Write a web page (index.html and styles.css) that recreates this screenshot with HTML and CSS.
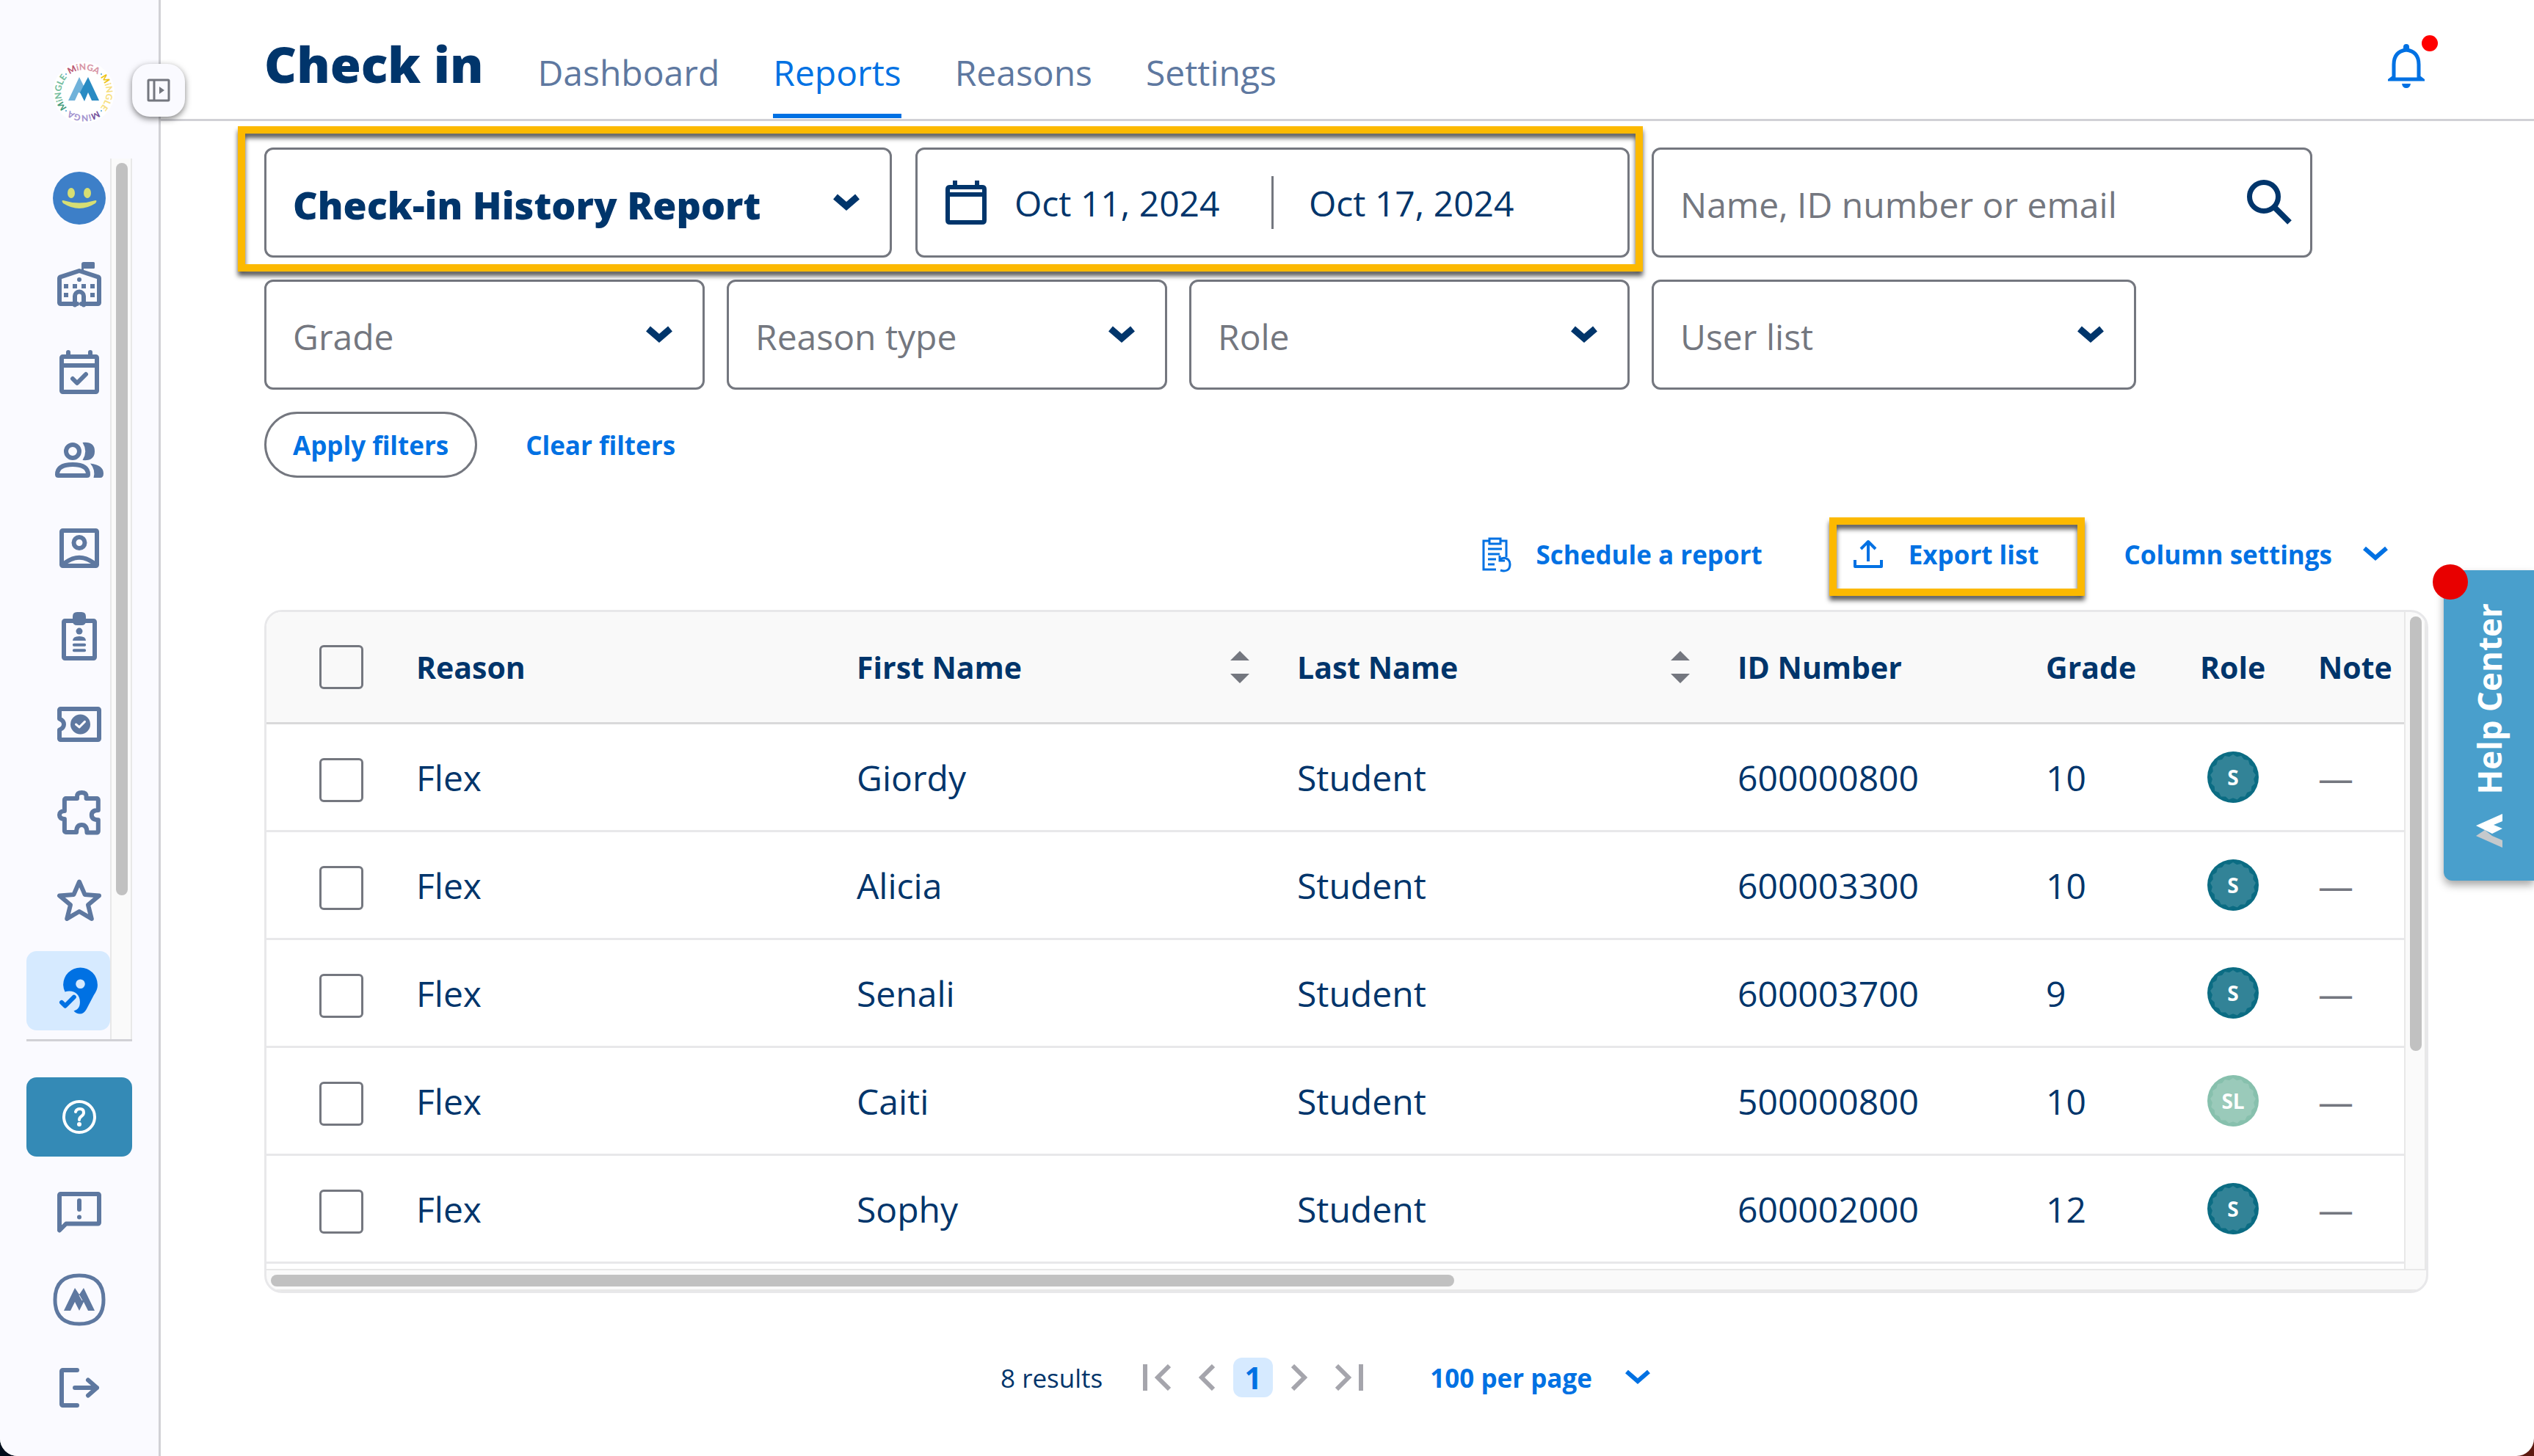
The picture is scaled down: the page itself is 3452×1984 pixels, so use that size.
FILE: index.html
```html
<!DOCTYPE html>
<html lang="en">
<head>
    <meta charset="UTF-8">
    <meta name="viewport" content="width=device-width, initial-scale=1.0">
    <title>Check in - Reports</title>
    <link rel="stylesheet" href="styles.css">
</head>
<body>
    <!-- Shared icons -->
    <svg class="sprite" aria-hidden="true">
        <symbol id="chevron" viewBox="0 0 40 26"><path d="M5 5l15 13L35 5"/></symbol>
        <symbol id="sort" viewBox="0 0 26 44"><path d="M13 0l13 13H0zM13 44l13-13H0z"/></symbol>
        <symbol id="badge" viewBox="0 0 70 70">
            <circle cx="35" cy="35" r="35"/>
            <path class="seal" d="M35 4L62.8 21.2 59.7 53.7 29.3 65.5 5.2 43.5 14.1 12.1 46.2 6.1 65.9 32.1 51.3 61.4 18.7 61.4 4.1 32.1 23.8 6.1 55.9 12.1 64.8 43.5 40.7 65.5 10.3 53.7 7.2 21.2z"/>
        </symbol>
    </svg>

    <div class="app">
        <aside class="sidebar">
            <a class="logo" href="#" aria-label="Minga">
                <svg viewBox="0 0 84 84">
                    <circle cx="42" cy="42" r="42" fill="#fff"/>
                    <path id="arcTop" d="M17 24A31 31 0 0 1 67 24" fill="none"/>
                    <path id="arcRight" d="M60 17A31 31 0 0 1 60 67" fill="none"/>
                    <path id="arcBottom" d="M67 60A31 31 0 0 1 17 60" fill="none"/>
                    <path id="arcLeft" d="M24 67A31 31 0 0 1 24 17" fill="none"/>
                    <text class="ring-text" fill="#d795a6"><textPath href="#arcTop" startOffset="50%"><tspan fill="#b95873">M</tspan>iNGA</textPath></text>
                    <text class="ring-text" fill="#f7df84"><textPath href="#arcRight" startOffset="50%"><tspan fill="#edc313">M</tspan>iNGLE</textPath></text>
                    <text class="ring-text" fill="#a595d0"><textPath href="#arcBottom" startOffset="50%"><tspan fill="#76539b">M</tspan>iNGA</textPath></text>
                    <text class="ring-text" fill="#77bea0"><textPath href="#arcLeft" startOffset="50%"><tspan fill="#459b79">M</tspan>iNGLE</textPath></text>
                    <path fill="#70b2da" d="M21 53L36 21l7 14-5 8-3-1-5 11z"/>
                    <path fill="#298bc3" d="M48 21l15 32H53l-5-11-5 12-6-12z"/>
                    <g fill="#4ba0cf"><circle cx="18" cy="17" r="1"/><circle cx="66" cy="17" r="1"/><circle cx="18" cy="67" r="1"/><circle cx="66" cy="67" r="1"/></g>
                </svg>
            </a>
            <button class="toggle" aria-label="Expand menu">
                <svg viewBox="0 0 32 32"><path d="M3 2h26a1 1 0 0 1 1 1v26a1 1 0 0 1-1 1H3a1 1 0 0 1-1-1V3a1 1 0 0 1 1-1zM10 2v28" fill="none" stroke="#74777f" stroke-width="3"/><path d="M17 11l7 5-7 5z" fill="#74777f"/></svg>
            </button>

            <nav class="menu" aria-label="Main">
                <ul class="menu-list">
                    <li><a href="#" aria-label="Profile"><svg viewBox="0 0 72 72"><circle cx="36" cy="36" r="36" fill="#3d7fc8"/><ellipse cx="25" cy="29" rx="5" ry="7" fill="#d7de73"/><ellipse cx="47" cy="29" rx="5" ry="7" fill="#d7de73"/><path d="M14 39q22 7 44 0 3 0 0 4-22 14-44 0-3-4 0-4z" fill="#d7de73"/></svg></a></li>
                    <li><a href="#" aria-label="School"><svg class="line" viewBox="0 0 24 24"><path d="M11 20H3.5a.5.5 0 0 1-.5-.5V8.500Q3 8 3.500 7.800L12 5l8.500 2.800q.5.200.5.700v11a.5.500 0 0 1-.5.500H13"/><path d="M10 20.500V16.500a2 2 0 0 1 4 0v4"/><path class="solid" d="M13 5V2q0-1 1-1h4.500q.5 0 .5.500v2q0 .5-.5.500H14v1zM5 11h2v2H5zM9 11h2v2H9zM13 11h2v2h-2zM17 11h2v2h-2zM5 15h2v2H5zM17 15h2v2h-2z"/><circle class="solid" cx="12" cy="9" r="1"/></svg></a></li>
                    <li><a href="#" aria-label="Calendar"><svg class="line" viewBox="0 0 24 24"><path d="M4.500 4h15a.5.500 0 0 1 .5.500v15a.5.500 0 0 1-.5.500h-15a.5.500 0 0 1-.5-.5v-15a.5.500 0 0 1 .5-.5zM4 8h16M7 2v2M17 2v2M9 14l2 2 4-4"/></svg></a></li>
                    <li><a href="#" aria-label="People"><svg class="line" viewBox="0 1 24 24"><circle cx="9" cy="8" r="3"/><path d="M2 18.500q0-4.500 7-4.500t7 4.500q0 .5-.5.500h-13q-.5 0-.5-.5z"/><path class="solid" d="M13.500 4Q19 3.500 19 8t-5.500 4Q16 8 13.500 4zM17 13.500q6 .8 6 4.500 0 2-1.500 2h-3q1-3.500-1.500-6.500z"/></svg></a></li>
                    <li><a href="#" aria-label="IDs"><svg class="line" viewBox="0 1 24 24"><path d="M4.500 4h15a.5.500 0 0 1 .5.500v15a.5.500 0 0 1-.5.500h-15a.5.500 0 0 1-.5-.5v-15a.5.500 0 0 1 .5-.5zM4.500 19.500q7.500-6.500 15 0"/><circle cx="12" cy="9.500" r="2.500"/></svg></a></li>
                    <li><a href="#" aria-label="Assignments"><svg class="line" viewBox="0 1 24 24"><path d="M5.500 5h13a.5.500 0 0 1 .5.500v16a.5.500 0 0 1-.5.500h-13a.5.500 0 0 1-.5-.5v-16a.5.500 0 0 1 .5-.5z"/><path class="solid" d="M9 3q0-2 2-2h2q2 0 2 2v2q0 2-2 2h-2Q9 7 9 5zM9 14q0-2 3-2t3 2z"/><circle class="solid" cx="12" cy="9.700" r="1.500"/><path d="M9.600 15.900h4.800M9.600 18.400h4.800" stroke-width="1.300"/></svg></a></li>
                    <li><a href="#" aria-label="Hall pass"><svg class="line" viewBox="0 1 24 24"><path d="M3.500 5h17a.5.500 0 0 1 .5.500v13a.5.500 0 0 1-.5.500h-17a.5.500 0 0 1-.5-.5v-4q2-.8 2-2.500T3 9.500v-4a.5.500 0 0 1 .5-.5z"/><circle class="solid" cx="12.500" cy="12" r="4.500"/><path d="M10.500 12l1.500 1.300 2.500-2.500" stroke="#fafaff" stroke-width="1"/></svg></a></li>
                    <li><a href="#" aria-label="Groups"><svg class="line" viewBox="0 0 24 24"><path d="M5.900 4.700H11V3.800q0-1.800 2.100-1.800t2.100 1.800v.9h4.800a.6.600 0 0 1 .6.600V10q-3 0-3 2.200t3 2.200v5.200a.6.600 0 0 1-.6.600H15.500q0-3.500-2.400-3.500T10.700 20H5.900a.6.600 0 0 1-.6-.6V14Q3 14 3 12.200t2.300-1.900v-5a.6.600 0 0 1 .6-.6z"/></svg></a></li>
                    <li><a href="#" aria-label="Points"><svg class="line" viewBox="0 1 24 24"><path d="M12 3.500l2.500 5.800 6.500.5-5 4.200 1.600 6.300-5.600-3.300-5.600 3.300L8 14 3 9.800l6.500-.5z"/></svg></a></li>
                    <li><a class="active" href="#" aria-label="Check in" aria-current="page"><svg viewBox="0 0 24 24"><path fill="#0071e3" fill-rule="evenodd" d="M12.500 1.500a7.800 7.800 0 0 1 7.800 7.800c0 2-.8 3.300-1.700 4.700l-3.400 6.500q-1.100 2-2.900 2-1.700 0-2.800-1.300c2.400-.8 2.800-2.400 2.800-4.200 0-3.500-3-5.600-6.800-4.500A8.600 8.600 0 0 1 4.700 9.300a7.800 7.800 0 0 1 7.800-7.800zm0 5.300a2.100 2.100 0 1 0 0 4.200 2.100 2.100 0 0 0 0-4.200z"/><path d="M4 17.300l1.600 1.600 4-4" fill="none" stroke="#0071e3" stroke-width="2" stroke-linecap="round" stroke-linejoin="round"/></svg></a></li>
                </ul>
                <div class="menu-track"><span class="thumb"></span></div>
            </nav>

            <div class="menu-footer">
                <button class="help" aria-label="Help"><svg viewBox="0 0 48 48"><circle cx="24" cy="24" r="21" fill="none" stroke="#fff" stroke-width="4"/><path d="M19 17q1-4 6-4t5 5q0 3-3 5t-3 5" fill="none" stroke="#fff" stroke-width="4" stroke-linecap="round"/><circle cx="24" cy="34" r="3" fill="#fff"/></svg></button>
                <a href="#" aria-label="Feedback"><svg class="line" viewBox="0 0 24 24"><path d="M3 20.500V4.500a.5.500 0 0 1 .5-.5h17a.5.500 0 0 1 .5.500v12.500a.5.500 0 0 1-.5.500H6zM12 7v4"/><circle class="solid" cx="12" cy="14.500" r="1"/></svg></a>
                <a href="#" aria-label="Minga home"><svg viewBox="0 0 72 72"><path d="M36 3Q69 3 69 36T36 69 3 36 36 3z" fill="none" stroke="#5e78a0" stroke-width="5"/><path fill="#5e78a0" d="M15 51l15-31 6 9 6-9 15 31H48l-6-12-6 12-6-12-6 12z"/><path d="M36 30l4 7" stroke="#fafaff" stroke-width="1"/></svg></a>
                <a href="#" aria-label="Log out"><svg class="line" viewBox="0 0 24 24"><path d="M11 4H4.500a.5.500 0 0 0-.5.500v15a.5.500 0 0 0 .5.500H11M10 12h10M16 8.500l4 3.500-4 3.500"/></svg></a>
            </div>
        </aside>

        <div class="page">
            <header class="header">
                <h1>Check in</h1>
                <nav class="tabs" aria-label="Check in">
                    <a href="#">Dashboard</a>
                    <a class="current" href="#" aria-current="page">Reports</a>
                    <a href="#">Reasons</a>
                    <a href="#">Settings</a>
                </nav>
                <button class="bell" aria-label="Notifications">
                    <svg viewBox="0 0 50 60"><path d="M25 8q-17 2-17 20v17l-4 3h42l-4-3V28Q42 10 25 8z" fill="none" stroke="#0071e3" stroke-width="5"/><path d="M21 10V4a4 4 0 0 1 8 0v6zM19 54h12q-1 6-6 6t-6-6z" fill="#0071e3"/></svg>
                    <span class="dot"></span>
                </button>
            </header>

            <main class="content">
                <form class="filters">
                    <div class="row">
                        <div class="report-range">
                            <div class="field report">
                                <select aria-label="Report"><option>Check-in History Report</option></select>
                                <svg class="chevron"><use href="#chevron"/></svg>
                            </div>
                            <div class="dates">
                                <svg class="calendar" viewBox="0 0 56 60"><path d="M6 9h44q3 0 3 3v42q0 3-3 3H6q-3 0-3-3V12q0-3 3-3z" fill="none" stroke="#00356b" stroke-width="6"/><path d="M3 19h50M13 0v10M43 0v10" stroke="#00356b" stroke-width="6"/></svg>
                                <input type="text" aria-label="Start date" value="Oct 11, 2024">
                                <input type="text" aria-label="End date" value="Oct 17, 2024">
                            </div>
                        </div>
                        <div class="field search">
                            <input type="text" aria-label="Search" placeholder="Name, ID number or email">
                            <svg viewBox="0 0 62 62"><circle cx="23" cy="23" r="19.500" fill="none" stroke="#00356b" stroke-width="7"/><path d="M36 36l22 22" stroke="#00356b" stroke-width="8"/></svg>
                        </div>
                    </div>
                    <div class="row">
                        <div class="field"><select aria-label="Grade"><option>Grade</option></select><svg class="chevron"><use href="#chevron"/></svg></div>
                        <div class="field"><select aria-label="Reason type"><option>Reason type</option></select><svg class="chevron"><use href="#chevron"/></svg></div>
                        <div class="field"><select aria-label="Role"><option>Role</option></select><svg class="chevron"><use href="#chevron"/></svg></div>
                        <div class="field wide"><select aria-label="User list"><option>User list</option></select><svg class="chevron"><use href="#chevron"/></svg></div>
                    </div>
                    <div class="row">
                        <button class="btn outlined" type="submit">Apply filters</button>
                        <button class="btn" type="reset">Clear filters</button>
                    </div>
                </form>

                <div class="toolbar">
                    <button class="btn">
                        <svg class="schedule" viewBox="0 0 42 50"><path d="M20 46H3V7h8M26 7h8v22M11 4h15v7H11zM9 18h19M9 25h16M9 32h11M9 39h9" fill="none" stroke="#0071e3" stroke-width="3"/><path d="M25 33q4-4 9-2t5 8-4 8-9 0M25 27v7h7" fill="none" stroke="#0071e3" stroke-width="3"/></svg>
                        Schedule a report
                    </button>
                    <button class="btn export">
                        <svg class="upload" viewBox="0 0 40 40"><path d="M20 30V4M10 13L20 3l10 10M2 28v9h36v-9" fill="none" stroke="#0071e3" stroke-width="4" stroke-linejoin="round"/></svg>
                        Export list
                    </button>
                    <button class="btn">Column settings <svg class="chevron thin"><use href="#chevron"/></svg></button>
                </div>

                <div class="grid">
                    <div class="grid-body">
                        <table>
                            <colgroup>
                                <col class="col-check"><col><col><col><col class="col-id"><col class="col-grade"><col class="col-role"><col class="col-note">
                            </colgroup>
                            <thead>
                                <tr>
                                    <th class="check"><input type="checkbox" aria-label="Select all"></th>
                                    <th>Reason</th>
                                    <th><div class="sortable">First Name <svg class="sort"><use href="#sort"/></svg></div></th>
                                    <th><div class="sortable">Last Name <svg class="sort"><use href="#sort"/></svg></div></th>
                                    <th>ID Number</th>
                                    <th>Grade</th>
                                    <th>Role</th>
                                    <th>Note</th>
                                </tr>
                            </thead>
                            <tbody>
                                <tr>
                                    <td class="check"><input type="checkbox" aria-label="Select Giordy"></td>
                                    <td>Flex</td><td>Giordy</td><td>Student</td><td>600000800</td><td>10</td>
                                    <td><span class="role"><svg><use href="#badge"/></svg><b>S</b></span></td>
                                    <td class="note">—</td>
                                </tr>
                                <tr>
                                    <td class="check"><input type="checkbox" aria-label="Select Alicia"></td>
                                    <td>Flex</td><td>Alicia</td><td>Student</td><td>600003300</td><td>10</td>
                                    <td><span class="role"><svg><use href="#badge"/></svg><b>S</b></span></td>
                                    <td class="note">—</td>
                                </tr>
                                <tr>
                                    <td class="check"><input type="checkbox" aria-label="Select Senali"></td>
                                    <td>Flex</td><td>Senali</td><td>Student</td><td>600003700</td><td>9</td>
                                    <td><span class="role"><svg><use href="#badge"/></svg><b>S</b></span></td>
                                    <td class="note">—</td>
                                </tr>
                                <tr>
                                    <td class="check"><input type="checkbox" aria-label="Select Caiti"></td>
                                    <td>Flex</td><td>Caiti</td><td>Student</td><td>500000800</td><td>10</td>
                                    <td><span class="role leader"><svg><use href="#badge"/></svg><b>SL</b></span></td>
                                    <td class="note">—</td>
                                </tr>
                                <tr>
                                    <td class="check"><input type="checkbox" aria-label="Select Sophy"></td>
                                    <td>Flex</td><td>Sophy</td><td>Student</td><td>600002000</td><td>12</td>
                                    <td><span class="role"><svg><use href="#badge"/></svg><b>S</b></span></td>
                                    <td class="note">—</td>
                                </tr>
                            </tbody>
                        </table>
                    </div>
                    <div class="track-y"><span class="thumb"></span></div>
                    <div class="track-x"><span class="thumb"></span></div>
                </div>

                <div class="pagination">
                    <span class="results">8 results</span>
                    <button class="pager" aria-label="First page"><svg viewBox="0 0 38 36"><path d="M3 0v36M36 2L20 18l16 16"/></svg></button>
                    <button class="pager" aria-label="Previous page"><svg class="narrow" viewBox="0 0 22 36"><path d="M20 2L4 18l16 16"/></svg></button>
                    <button class="page-number" aria-current="page">1</button>
                    <button class="pager" aria-label="Next page"><svg class="narrow" viewBox="0 0 22 36"><path d="M2 2l16 16L2 34"/></svg></button>
                    <button class="pager" aria-label="Last page"><svg viewBox="0 0 38 36"><path d="M35 0v36M2 2l16 16L2 34"/></svg></button>
                    <button class="btn per-page">100 per page <svg class="chevron thin"><use href="#chevron"/></svg></button>
                </div>
            </main>
        </div>

        <button class="help-center">
            <span class="help-dot"></span>
            <svg viewBox="0 0 36 46"><path fill="#c5c9cc" d="M36 46L0 30l12-8 10 8 14 6z"/><path fill="#fff" d="M36 0L0 16l22 11 14-7-12-5 12-5z"/></svg>
            <span>Help Center</span>
        </button>
    </div>
</body>
</html>
```

FILE: styles.css
```css
* {
    box-sizing: border-box;
}
html {
    background: linear-gradient(90deg, #020d1c 50%, #5c1a10 50%);
}
body {
    margin: 0;
    font-family: 'Open Sans', 'Noto Sans', sans-serif;
    font-size: 48px;
    color: #00356b;
}
button, input, select {
    font-family: inherit;
    font-size: inherit;
    font-weight: inherit;
    color: inherit;
    background: none;
    border: none;
    margin: 0;
    padding: 0;
}
button {
    cursor: pointer;
}
a {
    color: inherit;
    text-decoration: none;
}
svg {
    display: block;
    flex: none;
}
.sprite {
    position: absolute;
    width: 0;
    height: 0;
}
.app {
    position: relative;
    display: flex;
    min-height: 100vh;
    background-color: #fff;
    border-radius: 0 0 24px 24px;
    overflow: hidden;
}

/* Sidebar */
.sidebar {
    position: relative;
    width: 219px;
    flex: none;
    background-color: #fafaff;
    border-right: 3px solid #d1d1d6;
    padding: 0 36px;
}
.logo {
    display: block;
    padding: 84px 0 48px 36px;
}
.logo svg {
    width: 84px;
    height: 84px;
}
.ring-text {
    font-family: 'Lato', sans-serif;
    font-size: 12px;
    font-weight: 900;
    text-anchor: middle;
}
.toggle {
    position: absolute;
    top: 87px;
    left: 180px;
    display: grid;
    place-items: center;
    width: 72px;
    height: 72px;
    border-radius: 24px;
    background-color: #fafaff;
    box-shadow: 0 3px 9px rgba(0, 0, 0, 0.5);
}
.toggle svg {
    width: 32px;
    height: 32px;
}
.menu {
    display: flex;
    border-bottom: 3px solid #d1d1d6;
}
.menu-list {
    list-style: none;
    margin: 0;
    padding: 0 0 12px;
    flex: 1;
    display: grid;
    gap: 12px;
}
.menu-list a {
    display: flex;
    align-items: center;
    height: 108px;
    padding-left: 36px;
    border-radius: 14px;
}
.menu-list svg, .menu-footer svg {
    width: 72px;
    height: 72px;
}
.menu-list .active {
    background-color: #d6eaff;
}
.line {
    fill: none;
    stroke: #5e78a0;
    stroke-width: 2;
    stroke-linecap: round;
    stroke-linejoin: round;
}
.line .solid {
    fill: #5e78a0;
    stroke: none;
}
.thumb {
    display: block;
    background-color: #c1c1c1;
    border-radius: 8px;
}
.menu-track {
    width: 30px;
    padding: 6px;
    background-color: #fafafa;
    border: solid #e8e8e8;
    border-width: 0 2px;
}
.menu-track .thumb {
    width: 16px;
    height: 84%;
}
.menu-footer {
    display: grid;
    gap: 12px;
    margin-top: 49px;
}
.menu-footer a, .help {
    display: grid;
    place-items: center;
    height: 108px;
}
.help {
    background-color: #348ab6;
    border-radius: 14px;
    margin-bottom: 9px;
}
.menu-footer .help svg {
    width: 48px;
    height: 48px;
}

/* Header */
.page {
    flex: 1;
    min-width: 0;
}
.header {
    display: flex;
    align-items: flex-end;
    height: 165px;
    padding: 0 132px 0 141px;
    border-bottom: 3px solid #d1d1d6;
}
h1 {
    margin: 0;
    font-size: 68px;
    line-height: 72px;
    font-weight: 800;
    padding-bottom: 39px;
}
.tabs {
    display: flex;
    gap: 73px;
    margin: 0 auto 1px 74px;
    color: #5e78a0;
}
.tabs a {
    line-height: 48px;
    padding-bottom: 32px;
    border-bottom: 6px solid transparent;
}
.tabs .current {
    color: #0071e3;
    border-color: #0071e3;
}
.bell {
    position: relative;
    margin: 0 17px 42px 0;
}
.bell svg {
    width: 50px;
    height: 60px;
}
.dot {
    position: absolute;
    top: -12px;
    right: -18px;
    width: 22px;
    height: 22px;
    border-radius: 50%;
    background-color: #f00;
}

/* Filters */
.content {
    padding: 36px 144px 0 141px;
}
.filters {
    display: grid;
    gap: 30px;
}
.row {
    display: flex;
    gap: 30px;
}
.report-range {
    position: relative;
    display: flex;
    gap: 32px;
}
.report-range::after, .export::after {
    content: '';
    position: absolute;
    inset: -29px -18px -19px -36px;
    border: 10px solid #fcb900;
    filter: drop-shadow(0 6px 3px rgba(0, 0, 0, 0.65));
    pointer-events: none;
}
.field {
    display: grid;
    align-items: center;
    width: 600px;
    height: 150px;
    border: 3px solid #74777f;
    border-radius: 12px;
    color: #74777f;
}
.field > * {
    grid-area: 1 / 1;
}
.field select, .field input {
    appearance: none;
    width: 100%;
    height: 100%;
    padding: 5px 36px 0;
    outline: none;
}
.field input::placeholder {
    color: #74777f;
    opacity: 1;
}
.field svg {
    justify-self: end;
    pointer-events: none;
}
.wide {
    width: 660px;
}
.report {
    width: 855px;
    font-size: 52px;
    font-weight: 800;
    color: #00356b;
}
.chevron {
    width: 40px;
    height: 26px;
    margin-right: 39px;
    fill: none;
    stroke: #00356b;
    stroke-width: 9;
}
.thin {
    margin: 0;
    stroke: #0071e3;
    stroke-width: 6;
}
.dates {
    display: flex;
    align-items: center;
    width: 973px;
    height: 150px;
    padding: 0 38px;
    border: 3px solid #74777f;
    border-radius: 12px;
}
.dates input {
    width: 350px;
    height: 72px;
}
.dates input + input {
    border-left: 3px solid #74777f;
    padding-left: 48px;
}
.calendar {
    width: 56px;
    height: 60px;
    margin-right: 38px;
}
.search {
    width: 900px;
}
.field.search svg {
    width: 62px;
    height: 62px;
    margin-right: 24px;
}
.btn {
    display: flex;
    align-items: center;
    height: 90px;
    padding: 0 36px;
    font-size: 35px;
    font-weight: 700;
    color: #0071e3;
    border-radius: 45px;
}
.outlined {
    border: 3px solid #74777f;
}

/* Toolbar */
.toolbar {
    display: flex;
    justify-content: flex-end;
    gap: 44px;
    margin: 59px 16px 31px 0;
}
.export {
    position: relative;
    margin-left: 8px;
}
.export::after {
    inset: -5px -26px -12px 3px;
}
.toolbar .chevron {
    margin-left: 39px;
}
.schedule {
    width: 42px;
    height: 50px;
    margin-right: 32px;
}
.upload {
    width: 40px;
    height: 40px;
    margin-right: 35px;
}

/* Table */
.grid {
    display: grid;
    grid-template-columns: minmax(0, 1fr) 30px;
    border: 3px solid #e8e8ea;
    border-radius: 24px;
    background-color: #fafafa;
    overflow: hidden;
}
.grid-body {
    background-color: #fff;
    padding-bottom: 7px;
}
table {
    width: 100%;
    table-layout: fixed;
    border-collapse: separate;
    border-spacing: 0;
}
.col-check {
    width: 204px;
}
.col-id {
    width: 420px;
}
.col-grade {
    width: 210px;
}
.col-role {
    width: 161px;
}
.col-note {
    width: 117px;
}
th, td {
    padding: 0;
    text-align: left;
    white-space: nowrap;
}
th {
    height: 153px;
    font-size: 41px;
    font-weight: 700;
    background-color: #f9f9f9;
    border-bottom: 3px solid #d9d9da;
}
td {
    height: 147px;
    border-bottom: 3px solid #e8e8ea;
}
.check {
    padding-left: 72px;
}
td.check {
    padding-top: 8px;
}
.check input {
    appearance: none;
    display: block;
    width: 60px;
    height: 60px;
    border: 3px solid #74777f;
    border-radius: 6px;
}
.sortable {
    display: flex;
    align-items: center;
    justify-content: space-between;
    padding-right: 65px;
}
.sort {
    width: 26px;
    height: 44px;
    fill: #74777f;
}
.note {
    color: #74777f;
}
.role {
    display: grid;
    place-items: center;
    width: 70px;
    height: 70px;
    margin-left: 10px;
    fill: #0b6c83;
    color: #fff;
    font-size: 28px;
}
.role > * {
    grid-area: 1 / 1;
}
.role svg {
    width: 70px;
    height: 70px;
}
.seal {
    fill: #fff;
    fill-opacity: 0.16;
}
.leader {
    fill: #87c0ad;
}
.track-y {
    padding: 6px;
    border: solid #e8e8e8;
    border-width: 0 2px;
}
.track-y .thumb {
    width: 16px;
    height: 67%;
}
.track-x {
    grid-column: 1 / -1;
    height: 30px;
    padding: 6px;
    border: solid #e8e8e8;
    border-width: 2px 0;
}
.track-x .thumb {
    width: 55%;
    height: 16px;
}

/* Pagination */
.pagination {
    display: flex;
    align-items: center;
    justify-content: center;
    margin: 70px 18px 0 0;
}
.results {
    font-size: 35px;
    margin-right: 36px;
}
.pager {
    padding: 0 19px;
}
.pager svg {
    width: 38px;
    height: 36px;
    fill: none;
    stroke: #a5a5ac;
    stroke-width: 6;
}
.pager .narrow {
    width: 22px;
}
.page-number {
    width: 54px;
    height: 54px;
    line-height: 54px;
    margin: 0 6px;
    border-radius: 12px;
    background-color: #d6eaff;
    color: #0071e3;
    font-size: 41px;
    font-weight: 700;
}
.per-page {
    margin-left: 36px;
}
.per-page .chevron {
    margin-left: 42px;
}

/* Help center tab */
.help-center {
    position: absolute;
    top: 777px;
    right: 0;
    display: flex;
    flex-direction: column-reverse;
    align-items: center;
    gap: 27px;
    width: 123px;
    padding: 45px 0;
    border-radius: 12px 0 0 12px;
    background-color: #499fcc;
    box-shadow: 0 6px 12px rgba(0, 0, 0, 0.35);
    color: #fff;
    font-size: 44px;
    font-weight: 700;
    line-height: 60px;
}
.help-center span:last-child {
    writing-mode: sideways-lr;
}
.help-center svg {
    width: 36px;
    height: 46px;
}
.help-dot {
    position: absolute;
    top: -8px;
    left: -15px;
    width: 48px;
    height: 48px;
    border-radius: 50%;
    background-color: #e80000;
}
```
